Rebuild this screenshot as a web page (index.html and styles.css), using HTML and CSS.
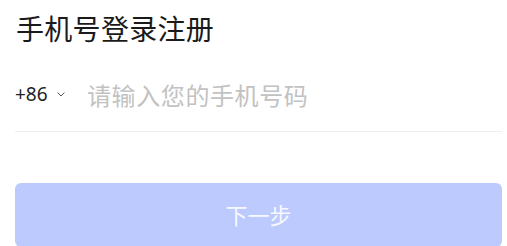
FILE: index.html
```html
<!DOCTYPE html>
<html lang="zh-CN">
<head>
<meta charset="utf-8">
<title>手机号登录注册</title>
<link rel="stylesheet" href="styles.css">
</head>
<body>
<main class="page">
  <h1 class="title">手机号登录注册</h1>
  <div class="phone-row">
    <div class="area">
      <span class="code">+86</span>
      <svg class="chev" width="8" height="5" viewBox="0 0 8 5"><path d="M0.6 0.6 L4 4 L7.4 0.6" fill="none" stroke="#555" stroke-width="1"/></svg>
    </div>
    <input class="phone-input" type="text" placeholder="请输入您的手机号码">
  </div>
  <button class="next-btn" type="button">下一步</button>
</main>
</body>
</html>
```
FILE: styles.css
```css
html, body {
  margin: 0;
  padding: 0;
  background: #ffffff;
}
body {
  font-family: "Noto Sans", "Noto Sans CJK SC", sans-serif;
  color: #1f1f1f;
}
.page {
  width: 487px;
  padding: 8px 0 0 15px;
  display: flex;
  flex-direction: column;
}
.title {
  margin: 0;
  padding-left: 1px;
  font-family: "Noto Sans CJK SC", sans-serif;
  font-size: 28px;
  font-weight: 400;
  line-height: 40px;
  letter-spacing: 0.3px;
  color: #1a1a1a;
}
.phone-row {
  margin-top: 16px;
  height: 68px;
  box-sizing: border-box;
  border-bottom: 1px solid #eeeeee;
  display: flex;
  align-items: center;
  padding-bottom: 7px;
}
.area {
  display: flex;
  align-items: center;
  gap: 9px;
  width: 72px;
  flex-shrink: 0;
}
.code {
  font-family: "Noto Sans", sans-serif;
  font-size: 19px;
  color: #222222;
  line-height: 24px;
}
.chev {
  display: block;
  margin-top: 1px;
}
.phone-input {
  flex: 1;
  border: none;
  outline: none;
  padding: 0;
  margin: 0;
  background: transparent;
  font-family: "Noto Sans CJK SC", sans-serif;
  font-size: 24px;
  letter-spacing: 0.6px;
  color: #333;
  height: 34px;
}
.phone-input::placeholder {
  color: #c2c2c2;
}
.next-btn {
  margin-top: 51px;
  height: 64px;
  border: none;
  border-radius: 6px;
  background: #bdcafd;
  color: rgba(255, 255, 255, 0.9);
  font-family: "Noto Sans CJK SC", sans-serif;
  font-size: 22px;
  line-height: 30px;
  padding: 0 0 2px 0;
  width: 487px;
}
```
